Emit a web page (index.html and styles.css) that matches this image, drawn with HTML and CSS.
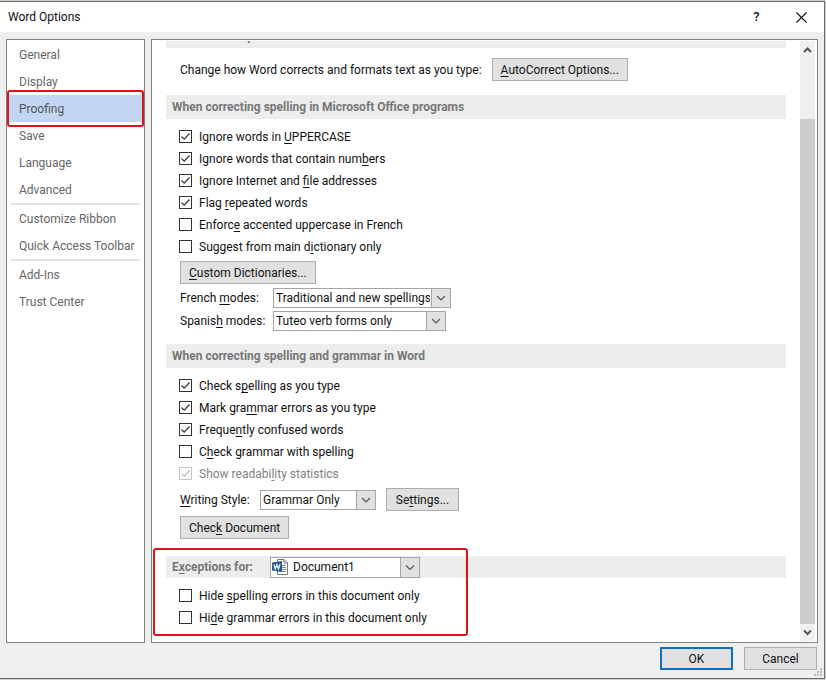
FILE: index.html
```html
<!DOCTYPE html>
<html lang="en">
<head>
    <meta charset="UTF-8">
    <meta name="viewport" content="width=device-width, initial-scale=1.0">
    <title>Word Options</title>
    <link rel="stylesheet" href="styles.css">
</head>
<body>

    <div class="dialog">
        <header class="titlebar">
            <h1>Word Options</h1>
            <button type="button" class="title-btn" aria-label="Help">?</button>
            <button type="button" class="title-btn" aria-label="Close">
                <svg width="11" height="11" viewBox="0 0 11 11"><path d="M0.5 0.5L10.5 10.5M10.5 0.5L0.5 10.5" stroke="#111" stroke-width="1.1" fill="none"/></svg>
            </button>
        </header>

        <div class="panels">
            <nav class="sidebar">
                <a href="#general">General</a>
                <a href="#display">Display</a>
                <a href="#proofing" class="active">Proofing</a>
                <a href="#save">Save</a>
                <a href="#language">Language</a>
                <a href="#advanced">Advanced</a>
                <hr>
                <a href="#ribbon">Customize Ribbon</a>
                <a href="#toolbar">Quick Access Toolbar</a>
                <hr>
                <a href="#addins">Add-Ins</a>
                <a href="#trust">Trust Center</a>
            </nav>

            <main class="content">
                <div class="page">
                    <h2 class="scrolled">AutoCorrect options</h2>
                    <div class="row autocorrect">
                        <span>Change how Word corrects and formats text as you type:</span>
                        <button type="button" class="btn"><u>A</u>utoCorrect Options...</button>
                    </div>

                    <h2>When correcting spelling in Microsoft Office programs</h2>
                    <div class="checks">
                        <label><input type="checkbox" checked><span>Ignore words in <u>U</u>PPERCASE</span></label>
                        <label><input type="checkbox" checked><span>Ignore words that contain num<u>b</u>ers</span></label>
                        <label><input type="checkbox" checked><span>Ignore Internet and <u>f</u>ile addresses</span></label>
                        <label><input type="checkbox" checked><span>Flag <u>r</u>epeated words</span></label>
                        <label><input type="checkbox"><span>Enforc<u>e</u> accented uppercase in French</span></label>
                        <label><input type="checkbox"><span>Suggest from main d<u>i</u>ctionary only</span></label>
                    </div>
                    <div class="row">
                        <button type="button" class="btn"><u>C</u>ustom Dictionaries...</button>
                    </div>
                    <div class="row mode">
                        <label for="french">French <u>m</u>odes:</label>
                        <span class="combo combo-french">
                            <select id="french"><option>Traditional and new spellings</option></select>
                            <svg class="arrow" viewBox="0 0 18 18"><path d="M5 7l4 4 4-4"/></svg>
                        </span>
                    </div>
                    <div class="row mode">
                        <label for="spanish">Spanis<u>h</u> modes:</label>
                        <span class="combo combo-spanish">
                            <select id="spanish"><option>Tuteo verb forms only</option></select>
                            <svg class="arrow" viewBox="0 0 18 18"><path d="M5 7l4 4 4-4"/></svg>
                        </span>
                    </div>

                    <h2>When correcting spelling and grammar in Word</h2>
                    <div class="checks">
                        <label><input type="checkbox" checked><span>Check s<u>p</u>elling as you type</span></label>
                        <label><input type="checkbox" checked><span>Mark gra<u>m</u>mar errors as you type</span></label>
                        <label><input type="checkbox" checked><span>Freque<u>n</u>tly confused words</span></label>
                        <label><input type="checkbox"><span>C<u>h</u>eck grammar with spelling</span></label>
                        <label class="disabled"><input type="checkbox" checked disabled><span>Show readabi<u>l</u>ity statistics</span></label>
                    </div>
                    <div class="row style">
                        <label for="style"><u>W</u>riting Style:</label>
                        <span class="combo combo-style">
                            <select id="style"><option>Grammar Only</option></select>
                            <svg class="arrow" viewBox="0 0 18 18"><path d="M5 7l4 4 4-4"/></svg>
                        </span>
                        <button type="button" class="btn">Se<u>t</u>tings...</button>
                    </div>
                    <div class="row">
                        <button type="button" class="btn">Chec<u>k</u> Document</button>
                    </div>

                    <section class="exceptions">
                        <div class="heading">
                            <label for="doc">E<u>x</u>ceptions for:</label>
                            <span class="combo combo-doc">
                                <select id="doc"><option>Document1</option></select>
                                <svg class="doc-icon" width="16" height="16" viewBox="0 0 16 16">
                                    <path d="M5.5 0.5h6.500l3.500 3.500v11.500h-10z" fill="#fff" stroke="#777"/>
                                    <path d="M12 0.500v3.500h3.500" fill="none" stroke="#777"/>
                                    <path d="M10 6.500h4M10 8.500h4M10 10.500h4M7 12.500h7" stroke="#6d8fc4"/>
                                    <path d="M0 3.500l10-1.500v11l-10-1.500z" fill="#2b5797"/>
                                    <path d="M1.800 5.500l1.500 4.500 1.600-4.300 1.600 4.300 1.500-4.700" fill="none" stroke="#fff" stroke-width="1.200"/>
                                </svg>
                                <svg class="arrow" viewBox="0 0 18 18"><path d="M5 7l4 4 4-4"/></svg>
                            </span>
                        </div>
                        <div class="checks">
                            <label><input type="checkbox"><span>Hide <u>s</u>pelling errors in this document only</span></label>
                            <label><input type="checkbox"><span>Hi<u>d</u>e grammar errors in this document only</span></label>
                        </div>
                    </section>
                </div>

                <div class="scrollbar">
                    <svg class="scroll-arrow" viewBox="0 0 15 17"><path d="M4 11l3.500-3.500L11 11"/></svg>
                    <div class="scroll-space"></div>
                    <div class="scroll-thumb"></div>
                    <svg class="scroll-arrow" viewBox="0 0 15 17"><path d="M4 6.500L7.500 10 11 6.500"/></svg>
                </div>
            </main>
        </div>

        <footer class="footer">
            <button type="button" class="btn primary">OK</button>
            <button type="button" class="btn">Cancel</button>
            <svg class="grip" width="8" height="8" viewBox="0 0 8 8"><path d="M6 0h2v2h-2zM3 3h2v2h-2zM6 3h2v2h-2zM0 6h2v2h-2zM3 6h2v2h-2zM6 6h2v2h-2z" fill="#bbb"/></svg>
        </footer>
    </div>

</body>
</html>
```
FILE: styles.css
```css
*, *::after {
    box-sizing: border-box;
}

body {
    margin: 0;
    padding: 1px 1px 1px 0;
    height: 100vh;
    background-color: #cfcfcf;
    font-family: Roboto, "Open Sans", sans-serif;
    font-size: 12px;
    line-height: 16px;
    color: #111;
}

button, select, input {
    font: inherit;
    color: inherit;
    margin: 0;
}

u {
    text-underline-offset: 2px;
    text-decoration-skip-ink: none;
}

.dialog {
    display: flex;
    flex-direction: column;
    height: 100%;
    background-color: #efefef;
    border: 1px solid #6b6b6b;
    border-left: none;
}

/* title bar */
.titlebar {
    display: flex;
    align-items: center;
    height: 30px;
    padding: 0 0 0 8px;
    background-color: #fff;
}

.titlebar h1 {
    flex: 1;
    margin: 0;
    font-size: 12px;
    font-weight: normal;
}

.title-btn {
    display: flex;
    align-items: center;
    justify-content: center;
    width: 45px;
    height: 28px;
    padding: 0;
    border: none;
    background: none;
    font-size: 13px;
    font-weight: 500;
}

.panels {
    flex: 1;
    display: flex;
    gap: 6px;
    min-height: 0;
    padding: 7px 6px 0;
}

/* left navigation */
.sidebar {
    width: 139px;
    padding: 1px;
    background-color: #fff;
    border: 1px solid #828282;
}

.sidebar a {
    display: block;
    padding: 1px 11px 0;
    line-height: 26px;
    color: #666;
    text-decoration: none;
    white-space: nowrap;
}

.sidebar .active {
    position: relative;
    background-color: #c2d5f2;
    color: #555;
}

.sidebar .active::after {
    content: "";
    position: absolute;
    inset: -5px -1px;
    border: 2px solid #dc1418;
    border-radius: 3px;
}

.sidebar hr {
    height: 2px;
    margin: 0 3px;
    border: none;
    background-color: #e2e2e2;
}

/* options page */
.content {
    flex: 1;
    display: flex;
    min-width: 0;
    padding: 1px 2px 1px 0;
    background-color: #fff;
    border: 1px solid #828282;
}

.page {
    flex: 1;
    padding: 0 14px;
    overflow: hidden;
}

h2, .heading {
    margin: 13px 0 7px;
    padding: 0 6px;
    background-color: #ededed;
    color: #777;
    font-size: 12px;
    font-weight: bold;
    line-height: 24px;
}

h2.scrolled {
    margin: -17px 0 0;
}

.row {
    display: flex;
    align-items: center;
    padding-left: 14px;
    margin-bottom: 3px;
}

.row + .row {
    margin-top: 4px;
}

.mode + .mode {
    margin-top: 3px;
}

.style + .row {
    margin-top: 5px;
}

.autocorrect {
    gap: 10px;
    padding-top: 10px;
    margin-bottom: 14px;
}

.btn {
    min-width: 73px;
    height: 23px;
    padding: 1px 8px 0;
    background-color: #e1e1e1;
    border: 1px solid #adadad;
    line-height: 20px;
    white-space: nowrap;
}

.checks label {
    display: flex;
    align-items: center;
    gap: 7px;
    height: 22px;
    padding-left: 13px;
}

.checks input {
    appearance: none;
    width: 13px;
    height: 13px;
    margin-bottom: 1px;
    background-color: #fff;
    border: 1px solid #333;
}

.checks input:checked {
    background-image: url("data:image/svg+xml,%3Csvg xmlns='http://www.w3.org/2000/svg' viewBox='0 0 11 11'%3E%3Cpath d='M1.500 5.500l2.700 2.700 5.300-5.700' fill='none' stroke='%23333' stroke-width='1.200'/%3E%3C/svg%3E");
}

.checks input:disabled {
    border-color: #c4c4c4;
}

.checks input:disabled:checked {
    background-image: url("data:image/svg+xml,%3Csvg xmlns='http://www.w3.org/2000/svg' viewBox='0 0 11 11'%3E%3Cpath d='M1.500 5.500l2.700 2.700 5.300-5.700' fill='none' stroke='%23bbb' stroke-width='1.200'/%3E%3C/svg%3E");
}

.disabled {
    color: #808080;
}

.checks + .row {
    margin-top: 3px;
}

/* drop-downs */
.combo {
    position: relative;
    display: flex;
    height: 20px;
}

.combo select {
    appearance: none;
    width: 100%;
    height: 100%;
    padding: 0 20px 0 2px;
    background-color: #fff;
    border: 1px solid #a5a5a5;
    border-radius: 0;
    line-height: 16px;
}

.arrow {
    position: absolute;
    top: 0;
    right: 0;
    width: 20px;
    height: 100%;
    background-color: #e1e1e1;
    border: 1px solid #a5a5a5;
    pointer-events: none;
}

.arrow path, .scroll-arrow path {
    fill: none;
    stroke: #555;
    stroke-width: 1.2;
}

.mode label {
    width: 93px;
}

.combo-french {
    width: 178px;
}

.combo-spanish {
    width: 173px;
}

.combo-style {
    width: 116px;
}

.style label {
    width: 80px;
}

.style .btn {
    margin-left: 10px;
}

/* exceptions block */
.exceptions {
    position: relative;
    margin-top: 17px;
}

.exceptions::after {
    content: "";
    position: absolute;
    top: -8px;
    left: -13px;
    width: 315px;
    bottom: -7px;
    border: 2px solid #dc1418;
    border-radius: 3px;
    pointer-events: none;
}

.heading {
    display: flex;
    align-items: center;
    height: 22px;
    margin-top: 0;
}

.heading label {
    width: 98px;
}

.combo-doc {
    width: 150px;
    height: 21px;
    color: #111;
    font-weight: normal;
}

.combo-doc select {
    padding-left: 22px;
}

.doc-icon {
    position: absolute;
    top: 2px;
    left: 2px;
    pointer-events: none;
}

/* scrollbar */
.scrollbar {
    display: flex;
    flex-direction: column;
    width: 15px;
    background-color: #f0f0f0;
}

.scroll-arrow {
    width: 15px;
    height: 17px;
}

.scroll-arrow path {
    stroke-width: 2;
}

.scroll-space {
    flex: 61;
}

.scroll-thumb {
    flex: 505;
    background-color: #cdcdcd;
}

.footer {
    position: relative;
    display: flex;
    justify-content: flex-end;
    gap: 11px;
    padding: 4px 7px 8px;
}

.footer .primary {
    border: 2px solid #1170bd;
    line-height: 18px;
}

.grip {
    position: absolute;
    right: 2px;
    bottom: 2px;
}
```
